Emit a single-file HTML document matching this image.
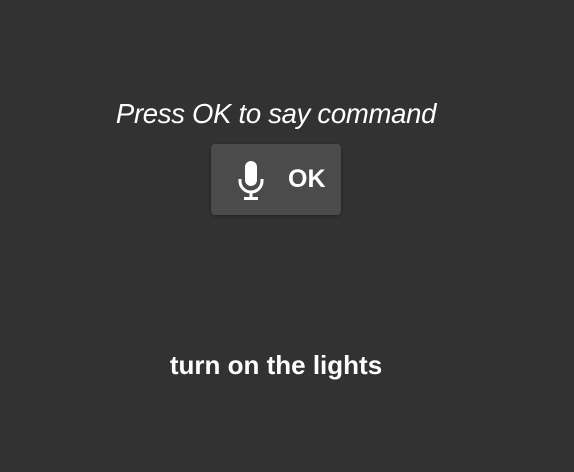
<!DOCTYPE html>
<html><head><style>
body{margin:0;width:574px;height:472px;background:#323232;font-family:"Liberation Sans",sans-serif;color:#fff;position:relative;overflow:hidden}
.t{position:absolute;left:0;width:552px;text-align:center;font-style:italic;font-size:27.5px;top:98px;letter-spacing:-0.3px}
.b{position:absolute;left:211px;top:144px;width:130px;height:71px;background:#4b4b4b;border-radius:4px;box-shadow:0 1px 3px rgba(0,0,0,.35)}
.ok{position:absolute;left:288px;top:165px;font-size:25px;font-weight:bold}
.l{position:absolute;left:0;width:552px;text-align:center;font-weight:bold;font-size:26px;top:350px}
</style></head><body>
<div class="t">Press OK to say command</div>
<div class="b"></div>
<svg style="position:absolute;left:236px;top:160px" width="30" height="42" viewBox="0 0 30 42">
<rect x="9" y="1" width="12" height="25" rx="6" fill="#fff"/>
<path d="M4 19 v2 a11 11 0 0 0 22 0 v-2" fill="none" stroke="#fff" stroke-width="3"/>
<rect x="13.5" y="31" width="3" height="8" fill="#fff"/>
<rect x="8" y="37" width="14" height="3" fill="#fff"/>
</svg>
<div class="ok">OK</div>
<div class="l">turn on the lights</div>
</body></html>
